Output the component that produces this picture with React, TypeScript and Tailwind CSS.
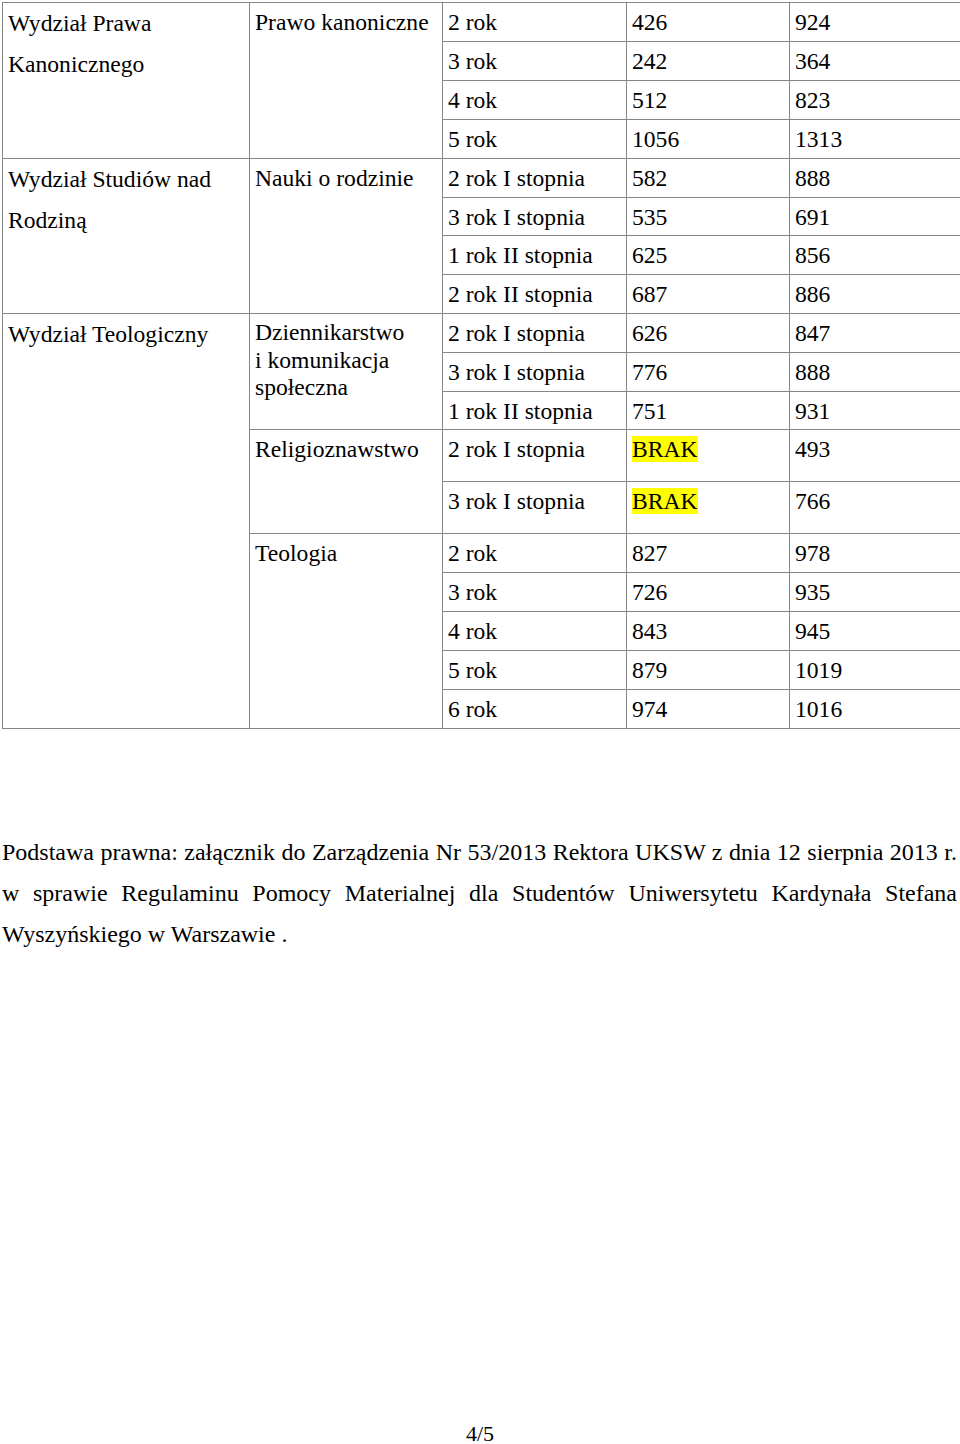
import React from "react";

type Row = {
  faculty?: { text: string[]; span: number };
  field?: { text: string[]; span: number; tight?: boolean };
  year: string;
  a: string;
  b: string;
  h: string;
};

const rows: Row[] = [
  { faculty: { text: ["Wydział Prawa", "Kanonicznego"], span: 4 }, field: { text: ["Prawo kanoniczne"], span: 4 }, year: "2 rok", a: "426", b: "924", h: "h-[39px]" },
  { year: "3 rok", a: "242", b: "364", h: "h-[39px]" },
  { year: "4 rok", a: "512", b: "823", h: "h-[39px]" },
  { year: "5 rok", a: "1056", b: "1313", h: "h-[39px]" },
  { faculty: { text: ["Wydział Studiów nad", "Rodziną"], span: 4 }, field: { text: ["Nauki o rodzinie"], span: 4 }, year: "2 rok I stopnia", a: "582", b: "888", h: "h-[39px]" },
  { year: "3 rok I stopnia", a: "535", b: "691", h: "h-[38px]" },
  { year: "1 rok II stopnia", a: "625", b: "856", h: "h-[39px]" },
  { year: "2 rok II stopnia", a: "687", b: "886", h: "h-[39px]" },
  {
    faculty: { text: ["Wydział Teologiczny"], span: 10 },
    field: { text: ["Dziennikarstwo", "i komunikacja", "społeczna"], span: 3, tight: true },
    year: "2 rok I stopnia",
    a: "626",
    b: "847",
    h: "h-[39px]",
  },
  { year: "3 rok I stopnia", a: "776", b: "888", h: "h-[39px]" },
  { year: "1 rok II stopnia", a: "751", b: "931", h: "h-[38px]" },
  { field: { text: ["Religioznawstwo"], span: 2 }, year: "2 rok I stopnia", a: "BRAK", b: "493", h: "h-[52px]" },
  { year: "3 rok I stopnia", a: "BRAK", b: "766", h: "h-[52px]" },
  { field: { text: ["Teologia"], span: 5 }, year: "2 rok", a: "827", b: "978", h: "h-[39px]" },
  { year: "3 rok", a: "726", b: "935", h: "h-[39px]" },
  { year: "4 rok", a: "843", b: "945", h: "h-[39px]" },
  { year: "5 rok", a: "879", b: "1019", h: "h-[39px]" },
  { year: "6 rok", a: "974", b: "1016", h: "h-[39px]" },
];

const cell = "border border-[#868686] align-top p-0 pl-[5px] pr-1";
const line = "leading-[36px] pt-[1px]";

export default function App() {
  return (
    <div className="w-[960px] h-[1444px] bg-white text-black font-['Liberation_Serif','Times_New_Roman',serif] text-[23.6px]">
      <div className="pt-[2px] pl-[2px]">
        <table className="table-fixed border-collapse w-[958px]">
          <colgroup>
            <col className="w-[247px]" />
            <col className="w-[193px]" />
            <col className="w-[184px]" />
            <col className="w-[163px]" />
            <col className="w-[171px]" />
          </colgroup>
          <tbody>
            {rows.map((r, i) => (
              <tr key={i} className={r.h}>
                {r.faculty && (
                  <td rowSpan={r.faculty.span} className={`${cell} leading-[41px]`}>
                    {r.faculty.text.map((t, j) => (
                      <div key={j}>{t}</div>
                    ))}
                  </td>
                )}
                {r.field && (
                  <td
                    rowSpan={r.field.span}
                    className={`${cell} ${r.field.tight ? "leading-[27.5px] pt-[5px]" : line}`}
                  >
                    {r.field.text.map((t, j) => (
                      <div key={j}>{t}</div>
                    ))}
                  </td>
                )}
                <td className={`${cell} ${line}`}>{r.year}</td>
                <td className={`${cell} ${line}`}>
                  {r.a === "BRAK" ? <span className="bg-[#ffff00]">BRAK</span> : r.a}
                </td>
                <td className={`${cell} ${line}`}>{r.b}</td>
              </tr>
            ))}
          </tbody>
        </table>
      </div>

      <div className="mt-[103px] pl-[2px] w-[957px] text-[24px] leading-[41px]">
        <p className="text-justify [text-align-last:justify]">
          Podstawa prawna: załącznik do Zarządzenia Nr 53/2013 Rektora UKSW z dnia 12 sierpnia 2013 r.
        </p>
        <p className="text-justify [text-align-last:justify]">
          w sprawie Regulaminu Pomocy Materialnej dla Studentów Uniwersytetu Kardynała Stefana
        </p>
        <p>Wyszyńskiego w Warszawie .</p>
      </div>

      <div className="mt-[466px] text-center text-[22px] leading-[26px]">4/5</div>
    </div>
  );
}
